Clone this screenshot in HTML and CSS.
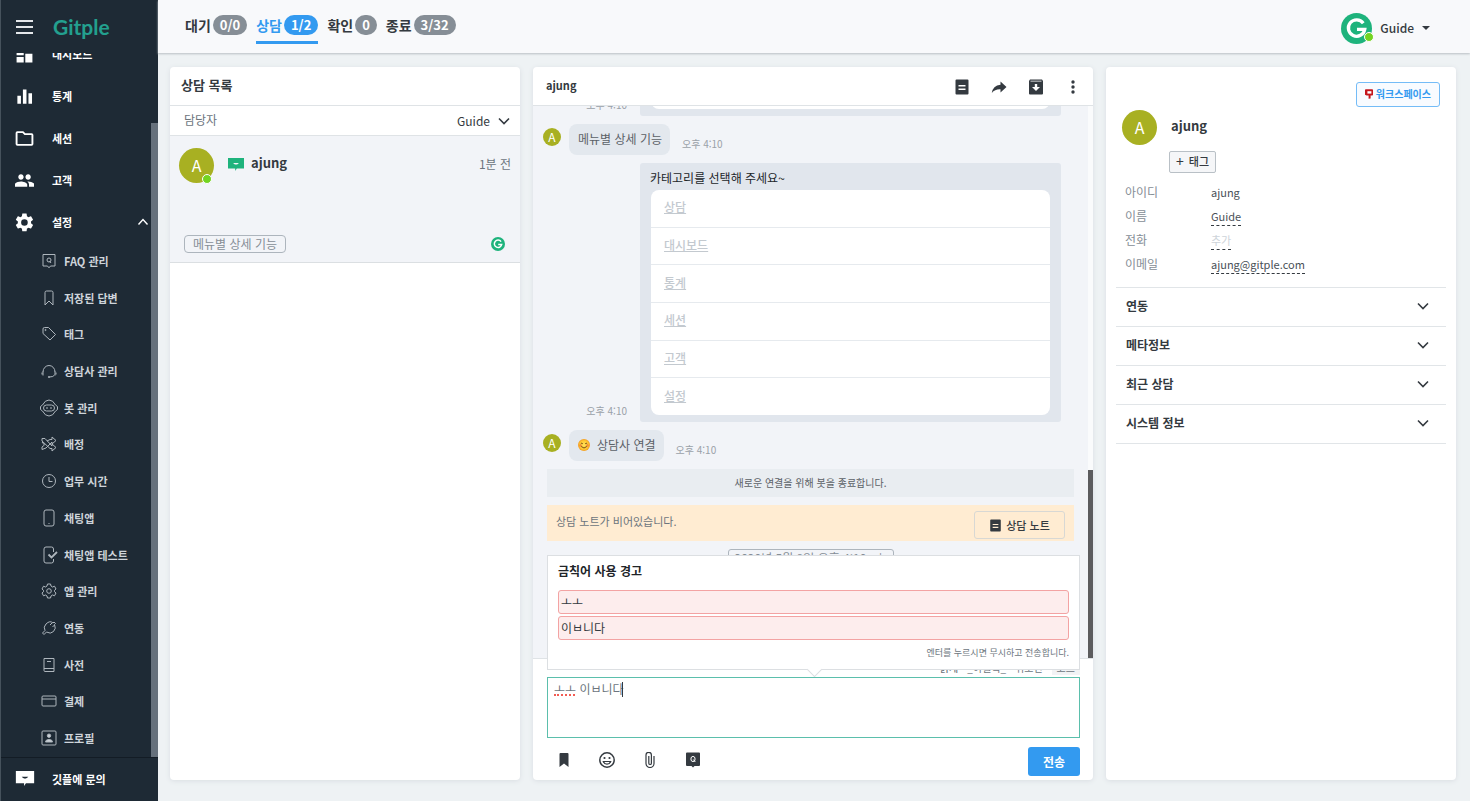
FILE: index.html
```html
<!DOCTYPE html>
<html lang="ko">
<head>
<meta charset="utf-8">
<title>Gitple 상담</title>
<link rel="stylesheet" href="styles.css">
</head>
<body>
<svg class="sprite" aria-hidden="true">
  <symbol id="note" viewBox="0 0 16 16"><path fill-rule="evenodd" d="M2.500 .5h11a1 1 0 0 1 1 1v13a1 1 0 0 1-1 1h-11a1 1 0 0 1-1-1v-13a1 1 0 0 1 1-1zM4.500 6v1.500h7V6zM4.500 9.500V11h7V9.500z"/></symbol>
  <symbol id="down" viewBox="0 0 12 12"><path d="M1 3.500l5 5 5-5" fill="none" stroke="currentColor" stroke-width="1.600"/></symbol>
  <symbol id="chat" viewBox="0 0 20 16"><path fill-rule="evenodd" d="M0 0h20v13h-9l-2 3v-3H0zM6.500 6c2 2.500 5 2.500 7 0z"/></symbol>
  <symbol id="glogo" viewBox="0 0 32 32"><circle cx="16" cy="16" r="16" fill="#1eb37c"/><path d="M23 10.500a8.500 8.500 0 1 0 1.500 6.500H16.500" fill="none" stroke="#fff" stroke-width="3.400"/></symbol>
</svg>
<div class="app">
  <aside class="sidebar">
    <div class="brand">
      <button class="burger" aria-label="메뉴"><span></span><span></span><span></span></button>
      <span class="logo">Gitple</span>
    </div>
    <nav class="nav">
      <a class="main-link" href="#"><svg viewBox="0 0 24 24"><path d="M2 13h9V3H2v10zm0 9h9v-7H2v7zm11 0h9V11h-9v11zm0-19v6h9V3h-9z"/></svg>대시보드</a>
      <a class="main-link" href="#"><svg viewBox="0 0 24 24"><path d="M3 11h4.500v10H3zM10 3h4.500v18H10zM17 8h4.500v13H17z"/></svg>통계</a>
      <a class="main-link" href="#"><svg viewBox="0 0 24 24"><path d="M3 4h7l2.500 2.500H21a1 1 0 0 1 1 1V19a1 1 0 0 1-1 1H3a1 1 0 0 1-1-1V5a1 1 0 0 1 1-1z" fill="none" stroke="currentColor" stroke-width="2.400"/></svg>세션</a>
      <a class="main-link" href="#"><svg viewBox="0 0 24 24"><path d="M16 11c1.660 0 3-1.340 3-3s-1.340-3-3-3-3 1.340-3 3 1.340 3 3 3zm-8 0c1.660 0 3-1.340 3-3S9.660 5 8 5 5 6.340 5 8s1.340 3 3 3zm0 2c-2.330 0-7 1.170-7 3.500V19h14v-2.500C15 14.170 10.330 13 8 13zm8 0c-.29 0-.62.02-.97.05 1.160.84 1.970 1.970 1.970 3.450V19h6v-2.500c0-2.330-4.670-3.500-7-3.500z" transform="translate(-1.500 -1.500) scale(1.130)"/></svg>고객</a>
      <a class="main-link" href="#"><svg viewBox="0 0 24 24"><path d="M19.140 12.940c.04-.3.060-.61.060-.94s-.02-.64-.07-.94l2.030-1.580c.18-.14.23-.41.120-.61l-1.920-3.320c-.12-.22-.37-.29-.59-.22l-2.390.96c-.5-.38-1.030-.7-1.620-.94l-.36-2.540c-.04-.24-.24-.41-.48-.41h-3.840c-.24 0-.43.17-.47.41l-.36 2.540c-.59.24-1.130.57-1.620.94l-2.390-.96c-.22-.08-.47 0-.59.22L2.740 8.870c-.12.21-.08.47.12.61l2.030 1.580c-.05.3-.09.630-.09.940s.02.64.07.94l-2.030 1.580c-.18.14-.23.41-.12.61l1.920 3.320c.12.22.37.29.59.22l2.390-.96c.5.38 1.030.7 1.620.94l.36 2.540c.05.24.24.41.48.41h3.840c.24 0 .44-.17.47-.41l.36-2.540c.59-.24 1.130-.56 1.620-.94l2.390.96c.22.08.47 0 .59-.22l1.920-3.320c.12-.22.07-.47-.12-.61l-2.010-1.580zM12 15.600a3.600 3.600 0 1 1 0-7.200 3.600 3.600 0 0 1 0 7.200z" transform="translate(-2 -2) scale(1.160)"/></svg>설정<svg class="up" viewBox="0 0 12 12"><path d="M1.500 8.500l4.500-5 4.500 5" fill="none" stroke="currentColor" stroke-width="1.400"/></svg></a>
      <div class="subnav">
        <a href="#"><svg viewBox="0 0 16 16"><path d="M2 1.500h12v11.500H9.500L8 14.800 6.500 13H2z"/><circle cx="8" cy="7" r="2"/><path d="M8.500 8l1.500 2"/></svg>FAQ 관리</a>
        <a href="#"><svg viewBox="0 0 16 16"><path d="M4 2.500Q4 1 5.500 1h5Q12 1 12 2.500V15l-4-4-4 4z"/></svg>저장된 답변</a>
        <a href="#"><svg viewBox="0 0 16 16"><path d="M2 3q0-1.500 1.500-1.500h4L14.500 8.500 9 14 2 7.500z"/><circle cx="4.500" cy="4" r=".6"/></svg>태그</a>
        <a href="#"><svg viewBox="0 0 16 16"><path d="M2 9a6 6.500 0 1 1 12 0M2 8.500v4M14 8.500v4M1 9.500v2M15 9.500v2M13.500 12q-1 2-5 2"/><circle cx="8" cy="14" r=".7"/></svg>상담사 관리</a>
        <a href="#"><svg viewBox="0 0 16 16"><path d="M1.500 5Q4 0 8 0t6.500 5L16.500 6.500v3L14.500 11Q12 16 8 16t-6.500-5L-.5 9.500v-3z"/><rect x="2.500" y="5" width="11" height="6" rx="3"/><path d="M6 7v2M10 7v2"/></svg>봇 관리</a>
        <a href="#"><svg viewBox="0 0 16 16"><path d="M1 2.500h3L11 10V8l4 3.500-4 3.500v-2.500H9L1 5zM1 13.500v-2.500L3.500 9 1 6M5 12l-4 1.500M6 5l3-1.500h2V1l4 3.500L11 8V6L5 12"/></svg>배정</a>
        <a href="#"><svg viewBox="0 0 16 16"><circle cx="8" cy="8" r="6.500"/><path d="M8 4v4.500h3.500"/></svg>업무 시간</a>
        <a href="#"><svg viewBox="0 0 16 16"><rect x="3" y="0" width="10" height="16" rx="2"/><path d="M7.500 13.500h1"/></svg>채팅앱</a>
        <a href="#"><svg viewBox="0 0 16 16"><path d="M12.500 5V2q0-2-2-2h-5.500q-2 0-2 2v12q0 2 2 2h5.500q2 0 2-2v-2"/><path d="M7.500 7.500l3 3L16 5" stroke-width="1.800"/></svg>채팅앱 테스트</a>
        <a href="#"><svg viewBox="0 0 16 16"><circle cx="8" cy="8" r="2.300"/><path d="M6.500 1h3l.5 2 1.500 1 2-.8 1.500 2.800-1.500 1.300v1.400L15 10l-1.500 2.800-2-.8-1.500 1-.5 2h-3L6 13l-1.500-1-2 .8L1 10l1.500-1.300V7.300L1 6l1.500-2.800 2 .8L6 3z"/></svg>앱 관리</a>
        <a href="#"><svg viewBox="0 0 16 16"><path d="M5 4q4-4 7-1l1-1 1.500 1.500-1 1q2 4-1 7t-7 .5L3 14.500 1.500 13 4 10.500Q2 7 5 4zM9 5l2-2M11.500 7l2-2"/></svg>연동</a>
        <a href="#"><svg viewBox="0 0 16 16"><path d="M3 1.500h10v13H4q-1 0-1-1zM3 11.500h10M6 4.500h4"/></svg>사전</a>
        <a href="#"><svg viewBox="0 0 16 16"><rect x="1" y="3" width="14" height="10" rx="1"/><path d="M1 6h14"/></svg>결제</a>
        <a href="#"><svg viewBox="0 0 16 16"><rect x="1" y="1" width="14" height="14" rx="1"/><path d="M8 4a1.700 1.700 0 1 1 0 3.400A1.700 1.700 0 0 1 8 4zM4.500 12q0-2.500 3.500-2.500t3.500 2.500z" fill="currentColor"/></svg>프로필</a>
      </div>
      <div class="nav-thumb"></div>
    </nav>
    <a class="main-link contact" href="#"><svg class="contact-icon" viewBox="0 0 20 16"><use href="#chat"/></svg>깃플에 문의</a>
  </aside>

  <div class="page">
    <header class="topbar">
      <nav class="tabs">
        <a class="tab" href="#">대기<span class="count">0/0</span></a>
        <a class="tab active" href="#">상담<span class="count">1/2</span></a>
        <a class="tab" href="#">확인<span class="count">0</span></a>
        <a class="tab" href="#">종료<span class="count">3/32</span></a>
      </nav>
      <button class="account"><span class="account-pic"><svg><use href="#glogo"/></svg><i class="online"></i></span>Guide<i class="caret"></i></button>
    </header>

    <main class="columns">
      <section class="card list">
        <h2 class="card-head">상담 목록</h2>
        <div class="filter"><span>담당자</span><button>Guide<svg class="ic12"><use href="#down"/></svg></button></div>
        <article class="conversation">
          <div class="conv-top">
            <span class="avatar">A<i class="online"></i></span>
            <svg class="chat-icon"><use href="#chat"/></svg>
            <strong>ajung</strong>
            <time>1분 전</time>
          </div>
          <div class="conv-bottom"><span class="tag">메뉴별 상세 기능</span><svg class="ic14"><use href="#glogo"/></svg></div>
        </article>
      </section>

      <section class="card chat">
        <div class="card-head chat-head">
          <h2>ajung</h2>
          <div class="actions">
            <button aria-label="노트"><svg class="ic16"><use href="#note"/></svg></button>
            <button aria-label="전달"><svg class="ic16" viewBox="0 0 16 16"><path d="M9.500 2.500L15.500 8l-6 5.500v-3.200Q4 10 .8 14 1.800 6.500 9.500 5.700z"/></svg></button>
            <button aria-label="보관"><svg class="ic16" viewBox="0 0 16 16"><path fill-rule="evenodd" d="M2 .5h12l1 1.500V14.500q0 1-1 1H2q-1 0-1-1V2zM2.500 1.700v.8h11v-.8zM6.800 5v3H4L8 12l4-4H9.200V5z"/></svg></button>
            <button aria-label="더보기"><svg class="ic16" viewBox="0 0 16 16"><circle cx="8" cy="3" r="1.700"/><circle cx="8" cy="8" r="1.700"/><circle cx="8" cy="13" r="1.700"/></svg></button>
          </div>
        </div>
        <div class="feed">
          <div class="feed-inner">
            <div class="row bot"><time>오후 4:10</time><div class="menu-card"><ul class="options short"><li></li></ul></div></div>
            <div class="row user"><span class="avatar small">A</span><p class="bubble">메뉴별 상세 기능</p><time>오후 4:10</time></div>
            <div class="row bot"><time>오후 4:10</time>
              <div class="menu-card"><p>카테고리를 선택해 주세요~</p>
                <ul class="options">
                  <li><a href="#">상담</a></li><li><a href="#">대시보드</a></li><li><a href="#">통계</a></li>
                  <li><a href="#">세션</a></li><li><a href="#">고객</a></li><li><a href="#">설정</a></li>
                </ul>
              </div>
            </div>
            <div class="row user"><span class="avatar small">A</span><p class="bubble"><svg class="smile" viewBox="0 0 12 12"><defs><radialGradient id="face"><stop offset="0" stop-color="#ffe25a"/><stop offset=".7" stop-color="#ffc933"/><stop offset="1" stop-color="#f29a1f"/></radialGradient></defs><circle cx="6" cy="6" r="6" fill="url(#face)"/><circle cx="2.500" cy="6.500" r="1.300" fill="#f58a3a"/><circle cx="9.500" cy="6.500" r="1.300" fill="#f58a3a"/><path d="M2.800 4.800q1-1.300 2 0M7.200 4.800q1-1.300 2 0M3.200 7.500q2.800 3 5.600 0" fill="none" stroke="#6b3d10" stroke-width=".9"/></svg>상담사 연결</p><time>오후 4:10</time></div>
            <p class="system">새로운 연결을 위해 봇을 종료합니다.</p>
            <div class="note-bar"><span>상담 노트가 비어있습니다.</span><button><svg class="ic14"><use href="#note"/></svg>상담 노트</button></div>
            <div class="date">2020년 5월 8일 오후 4:10<span>↓</span></div>
          </div>
          <div class="feed-track"><i></i></div>
        </div>
        <div class="composer">
          <div class="format"><b>굵게</b><em>_이탤릭_</em><s>취소선</s><button>코드</button></div>
          <div class="warning" role="alert">
            <h3>금칙어 사용 경고</h3>
            <p class="word">ㅗㅗ</p>
            <p class="word">이ㅂ니다</p>
            <p class="hint">엔터를 누르시면 무시하고 전송합니다.</p>
          </div>
          <div class="entry"><textarea aria-label="메시지" spellcheck="false">ㅗㅗ 이ㅂ니다</textarea><i class="typo"></i><i class="cursor"></i></div>
          <div class="tools">
            <button aria-label="저장된 답변"><svg class="ic16" viewBox="0 0 16 16"><path d="M3.500 2q0-1 1-1h7q1 0 1 1v13L8 11.500 3.500 15z"/></svg></button>
            <button aria-label="이모지"><svg class="ic16" viewBox="0 0 16 16"><circle cx="8" cy="8" r="7.200" fill="none" stroke="currentColor" stroke-width="1.500"/><circle cx="5.500" cy="6" r="1.100"/><circle cx="10.500" cy="6" r="1.100"/><path d="M4.300 9.500h7.400q-1 2.700-3.700 2.700T4.300 9.500z" fill="none" stroke="currentColor" stroke-width="1.200"/></svg></button>
            <button aria-label="파일 첨부"><svg class="ic16" viewBox="0 0 16 16"><path d="M12 4v7.500a4 4 0 0 1-8 0V3a2.700 2.700 0 0 1 5.400 0v8.200a1.300 1.300 0 0 1-2.600 0V4" fill="none" stroke="currentColor" stroke-width="1.200"/></svg></button>
            <button aria-label="FAQ"><svg class="ic16" viewBox="0 0 16 16"><path d="M2 .5h12q1 0 1 1V13q0 1-1 1H9.500L8 15.600 6.500 14H2q-1 0-1-1V1.500q0-1 1-1z"/><ellipse cx="8" cy="7" rx="2.100" ry="2.600" fill="none" stroke="#fff"/><path d="M8.300 7.500L10.300 10" stroke="#fff"/></svg></button>
            <button class="send">전송</button>
          </div>
        </div>
      </section>

      <section class="card detail">
        <button class="workspace"><svg viewBox="0 0 10 12"><path d="M1 0h8q1 0 1 1v6q0 1-1 1H7v3.500L4.500 12V8H2L0 7V1q0-1 1-1z" fill="#c5161d"/><path d="M3 2.500h5v3H3z" fill="#fff"/></svg>워크스페이스</button>
        <div class="person"><span class="avatar">A</span><div><h2>ajung</h2><button class="add-tag"><span>+</span>태그</button></div></div>
        <dl class="fields">
          <dt>아이디</dt><dd><span>ajung</span></dd>
          <dt>이름</dt><dd><a href="#">Guide</a></dd>
          <dt>전화</dt><dd><a class="empty" href="#">추가</a></dd>
          <dt>이메일</dt><dd><a href="#">ajung@gitple.com</a></dd>
        </dl>
        <div class="sections">
          <button>연동<svg class="ic12"><use href="#down"/></svg></button>
          <button>메타정보<svg class="ic12"><use href="#down"/></svg></button>
          <button>최근 상담<svg class="ic12"><use href="#down"/></svg></button>
          <button>시스템 정보<svg class="ic12"><use href="#down"/></svg></button>
        </div>
      </section>
    </main>
  </div>
</div>
</body>
</html>
```
FILE: styles.css
```css
* { box-sizing: border-box; }
body, h2, h3, p, ul, dl, dd { margin: 0; padding: 0; }
body { font: 12px/18px "Noto Sans CJK KR", "Noto Sans", sans-serif; color: #343a40; background: #eef2f4; }
button { font: inherit; color: inherit; background: none; border: 0; padding: 0; cursor: pointer; }
a { color: inherit; text-decoration: none; }
ul { list-style: none; }
h2, h3 { font-size: 12px; font-weight: 700; }
svg { fill: currentColor; flex: none; }
.sprite { position: absolute; width: 0; height: 0; }
.ic12 { width: 12px; height: 12px; }
.ic14 { width: 14px; height: 14px; }
.ic16 { width: 16px; height: 16px; display: block; }

.app { display: flex; height: 100vh; }

/* Sidebar */
.sidebar { width: 158px; flex: none; display: flex; flex-direction: column; background: #1e2a35; color: #fff; font-size: 11px; font-weight: 700; border-left: 1px solid #46525c; }
.brand { display: flex; align-items: center; gap: 20px; height: 53px; flex: none; padding-left: 15px; }
.burger { display: flex; flex-direction: column; gap: 4px; width: 17px; }
.burger span { height: 2px; background: #e4e7ea; }
.logo { font: 700 21px/24px Lato, sans-serif; color: #23a08f; }
.nav { flex: 1; min-height: 0; overflow: hidden; display: flex; flex-direction: column; position: relative; }
.main-link { display: flex; align-items: center; height: 42px; flex: none; padding-left: 14px; gap: 18px; }
.main-link svg { width: 19px; height: 19px; }
.main-link:first-child { margin-top: -20px; }
.main-link .up { width: 12px; height: 12px; margin-left: auto; margin-right: 9px; }
.subnav { flex: 1; display: flex; flex-direction: column; color: #ced4da; }
.subnav a { flex: 1; display: flex; align-items: center; gap: 7px; padding: 0 0 1px 40px; }
.subnav svg { width: 16px; height: 16px; fill: none; stroke: #aeb6bd; stroke-width: 1; overflow: visible; }
.nav-thumb { position: absolute; right: 0; top: 70px; bottom: 0; width: 7px; background: #66717c; }
.main-link.contact { height: 44px; border-top: 1px solid #131c25; gap: 17px; padding: 0 0 2px 14px; }
.contact .contact-icon { width: 20px; height: 15px; }

/* Top bar */
.page { flex: 1; min-width: 0; display: flex; flex-direction: column; }
.topbar { height: 53px; flex: none; display: flex; justify-content: space-between; padding: 0 40px 0 27px; background: #f8f9fb; box-shadow: 0 1px 2px #b9bfc4; }
.tabs { display: flex; gap: 9px; font-size: 14px; font-weight: 700; }
.tab { display: flex; align-items: center; gap: 2px; height: 44px; padding-top: 8px; border-bottom: 3px solid transparent; }
.tab.active { color: #339af0; border-color: #339af0; }
.count { background: #868e96; color: #fff; border-radius: 10px; padding: 0 7px; font-size: 13px; line-height: 20px; }
.active .count { background: #339af0; }
.account { display: flex; align-items: center; gap: 8px; font-weight: 500; padding-top: 3px; }
.account-pic { position: relative; width: 31px; height: 31px; }
.account-pic svg { width: 31px; height: 31px; }
.online { position: absolute; right: 2px; bottom: -1px; width: 10px; height: 10px; border-radius: 5px; background: #73d421; border: 1px solid #fff; }
.account-pic .online { right: -2px; bottom: 2px; }
.caret { border: 4px solid transparent; border-top-color: #343a40; border-bottom: 0; }

/* Columns */
.columns { flex: 1; min-height: 0; display: grid; grid-template-columns: 350fr 560fr 350fr; gap: 13px; padding: 14px 14px 21px 12px; }
.card { background: #fff; border-radius: 4px; box-shadow: 0 1px 5px #d9dee2; display: flex; flex-direction: column; min-width: 0; min-height: 0; }
.card-head { height: 39px; flex: none; border-bottom: 1px solid #dfe3e6; padding: 0 11px; font-size: 13px; line-height: 36px; }
.avatar { position: relative; width: 35px; height: 35px; flex: none; border-radius: 50%; background: #a8b022; color: #fff; font-size: 16px; line-height: 35px; text-align: center; }
.avatar.small { width: 18px; height: 18px; font-size: 12px; line-height: 18px; }

.filter { display: flex; justify-content: space-between; height: 30px; padding: 0 10px 0 14px; line-height: 28px; border-bottom: 1px solid #dfe3e6; color: #6c757d; }
.filter button { display: flex; align-items: center; gap: 8px; color: #343a40; }
.conversation { height: 127px; display: flex; flex-direction: column; justify-content: space-between; background: #f2f4f8; border-bottom: 1px solid #dbdfe2; padding: 12px 9px 9px; }
.conv-top { display: flex; align-items: flex-start; }
.chat-icon { width: 16px; height: 13px; margin: 10px 7px 0 14px; color: #1eb37c; }
.conv-top strong { font-size: 13px; margin-top: 6px; }
.conv-top time { margin: 7px 0 0 auto; color: #6c757d; }
.conv-bottom { display: flex; justify-content: space-between; align-items: center; padding: 0 6px 0 5px; }
.tag { border: 1px solid #adb5bd; border-radius: 4px; color: #868e96; padding: 0 8px; line-height: 16px; }

/* Chat */
.chat-head { display: flex; justify-content: space-between; align-items: center; padding: 0 12px 0 13px; }
.chat-head h2 { line-height: 36px; font-size: 11px; padding-bottom: 2px; }
.actions { display: flex; gap: 21px; padding-top: 2px; }
.feed { flex: 1; min-height: 0; display: flex; background: #f2f4f8; overflow: hidden; }
.feed-inner { flex: 1; min-width: 0; display: flex; flex-direction: column; justify-content: flex-end; padding: 0 10px; }
.feed-track { width: 5px; display: flex; flex-direction: column; justify-content: flex-end; background: #fafbfc; }
.feed-track i { height: 34%; background: #5c5c5e; }
.row { display: flex; flex: none; }
.row time { font-size: 10px; line-height: 14px; color: #9aa1a8; }
.row.bot { justify-content: flex-end; align-items: flex-end; gap: 13px; padding-right: 17px; }
.row.bot time { padding-bottom: 4px; }
.row.user { margin: 8px 0; align-items: flex-start; gap: 8px; }
.row.user .avatar { margin-top: 4px; }
.row.user time { margin: 13px 0 0 4px; }
.bubble { display: flex; align-items: center; gap: 7px; background: #e3e8ee; border-radius: 8px; padding: 0 8px 2px 9px; line-height: 29px; color: #5b6167; }
.smile { width: 12px; height: 12px; }
.menu-card { width: 421px; background: #e1e6ed; border-radius: 3px; padding: 6px 11px 7px; }
.menu-card p { color: #212529; margin-left: -1px; padding-bottom: 3px; }
.options { display: flex; flex-direction: column; height: 225px; background: #fff; border-radius: 8px; color: #c3c9cf; font-weight: 500; }
.options.short { height: 38px; }
.options li { flex: 1; display: flex; align-items: center; padding: 0 13px 2px; border-bottom: 1px solid #e6eaee; }
.options li:last-child { border: 0; }
.options a { text-decoration: underline; }
.system { flex: none; margin: 0 4px; background: #e9edf1; text-align: center; font-size: 10px; line-height: 28px; color: #5b6167; }
.note-bar { flex: none; margin: 8px 4px; height: 36px; display: flex; justify-content: space-between; padding: 6px 9px 2px; background: #ffecd2; font-size: 11px; line-height: 20px; color: #6c757d; }
.note-bar button { display: flex; align-items: center; justify-content: center; gap: 4px; width: 91px; border: 1px solid #d8d8d4; border-radius: 3px; color: #343a40; font-weight: 500; }
.note-bar button svg { width: 13px; height: 13px; }
.date { flex: none; align-self: center; width: 166px; height: 20px; margin-bottom: 89px; display: flex; justify-content: space-between; border: 1px solid #adb5bd; border-radius: 3px; padding: 0 6px; line-height: 16px; color: #868e96; }

.composer { position: relative; flex: none; border-top: 1px solid #dfe3e6; padding: 0 13px 4px 14px; }
.format { height: 18px; display: flex; justify-content: flex-end; align-items: center; gap: 9px; font-size: 10px; line-height: 14px; color: #6c757d; }
.format b { font-weight: 500; }
.format em { font-style: normal; }
.format s { text-decoration: none; }
.format button { background: #f1f3f5; padding: 0 5px; }
.warning { position: absolute; left: 14px; right: 13px; bottom: 110px; background: #fff; border: 1px solid #dcdfe2; padding: 6px 10px 5px; }
.warning::after { content: ""; position: absolute; left: 50%; bottom: -6px; width: 10px; height: 10px; margin-left: -5px; background: #fff; border: solid #dcdfe2; border-width: 0 1px 1px 0; transform: rotate(45deg); }
.warning h3 { padding-bottom: 10px; color: #212529; }
.word { background: #fdeded; border: 1px solid #f3a3a3; border-radius: 3px; padding: 0 2px; line-height: 22px; margin-bottom: 2px; }
.hint { text-align: right; font-size: 9px; line-height: 22px; color: #6c757d; }
.entry { position: relative; }
.entry textarea { display: block; width: 100%; height: 61px; border: 1px solid #5bbfac; padding: 2px 6px; font: inherit; color: #6c757d; resize: none; outline: 0; }
.typo { position: absolute; left: 7px; top: 17px; width: 21px; border-bottom: 2px dotted #f25c54; }
.cursor { position: absolute; left: 75px; top: 5px; width: 1px; height: 15px; background: #343a40; }
.tools { display: flex; align-items: center; gap: 27px; padding: 9px 0 0 9px; }
.tools button { padding-bottom: 3px; }
.tools .send { width: 52px; margin-left: auto; padding: 0; border-radius: 3px; background: #339af0; color: #fff; font-weight: 700; line-height: 29px; }

/* Customer details */
.detail { padding: 15px 10px; }
.workspace { align-self: flex-end; display: flex; align-items: center; gap: 3px; height: 25px; margin-right: 6px; padding: 0 8px 2px; border: 1px solid #74bcf7; border-radius: 3px; background: #f8fbff; color: #339af0; font-size: 10px; font-weight: 700; }
.workspace svg { width: 8px; height: 10px; }
.person { display: flex; gap: 12px; padding: 3px 6px 0; }
.person h2 { font-size: 13px; padding: 7px 2px 16px; }
.add-tag { display: flex; align-items: center; gap: 5px; height: 22px; padding: 0 6px 2px; border: 1px solid #b9c0c6; border-radius: 2px; background: #f5f6f8; font-size: 11px; font-weight: 500; }
.add-tag span { font-size: 14px; font-weight: 400; }
.fields { display: grid; grid-template-columns: 86px 1fr; line-height: 24px; padding: 7px 9px 0; }
.fields dt { color: #868e96; }
.fields dd { color: #495057; font-size: 11px; line-height: 17px; padding-top: 4px; height: 24px; }
.fields dd a { display: inline-block; border-bottom: 1px dashed #343a40; }
.fields .empty { color: #ced4da; }
.sections { margin-top: 11px; border-top: 1px solid #e1e5e8; }
.sections button { display: flex; justify-content: space-between; align-items: center; width: 100%; height: 39px; border-bottom: 1px solid #e1e5e8; padding: 0 17px 2px 10px; font-weight: 700; }
```
